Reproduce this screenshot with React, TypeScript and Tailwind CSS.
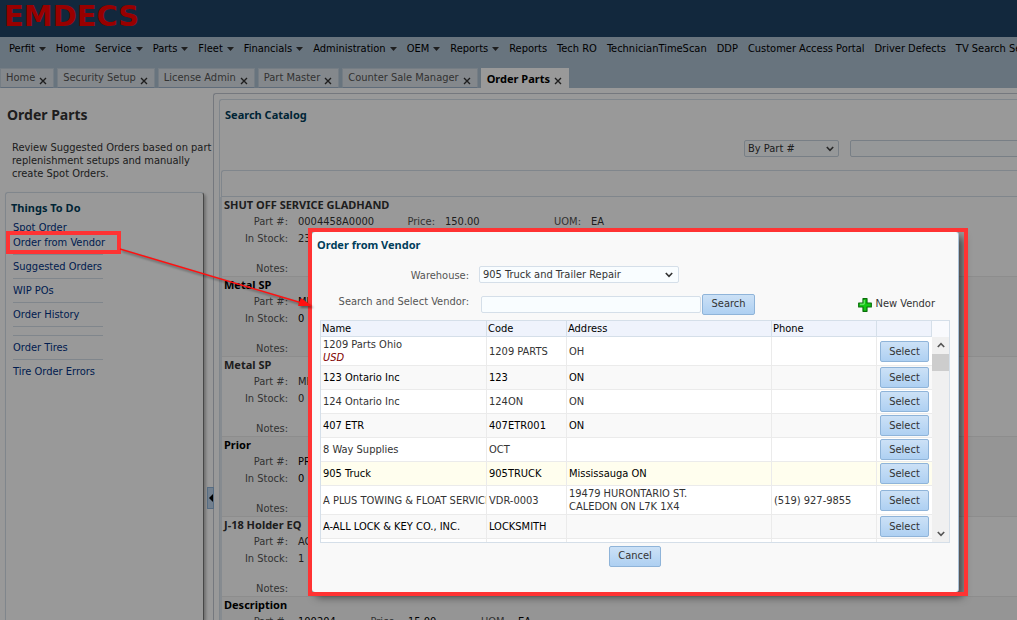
import clsx from "clsx";

const NAV = [
  { label: "Perfit", menu: true },
  { label: "Home" },
  { label: "Service", menu: true },
  { label: "Parts", menu: true },
  { label: "Fleet", menu: true },
  { label: "Financials", menu: true },
  { label: "Administration", menu: true },
  { label: "OEM", menu: true },
  { label: "Reports", menu: true },
  { label: "Reports" },
  { label: "Tech RO" },
  { label: "TechnicianTimeScan" },
  { label: "DDP" },
  { label: "Customer Access Portal" },
  { label: "Driver Defects" },
  { label: "TV Search Se" },
];

const TABS = ["Home", "Security Setup", "License Admin", "Part Master", "Counter Sale Manager", "Order Parts"];

const PARTS = [
  { title: "SHUT OFF SERVICE GLADHAND", part: "0004458A0000", stock: "23", price: "150.00" },
  { title: "Metal SP", part: "ME", stock: "0" },
  { title: "Metal SP", part: "ME", stock: "0" },
  { title: "Prior", part: "PR", stock: "0" },
  { title: "J-18 Holder EQ", part: "AC", stock: "1" },
  { title: "Description", part: "100204", stock: "0", price: "15.00", compact: true },
];

const VENDORS = [
  { name: "1209 Parts Ohio", currency: "USD", code: "1209 PARTS", address: ["OH"] },
  { name: "123 Ontario Inc", code: "123", address: ["ON"] },
  { name: "124 Ontario Inc", code: "124ON", address: ["ON"] },
  { name: "407 ETR", code: "407ETR001", address: ["ON"] },
  { name: "8 Way Supplies", code: "OCT", address: [] },
  { name: "905 Truck", code: "905TRUCK", address: ["Mississauga ON"], active: true },
  {
    name: "A PLUS TOWING & FLOAT SERVICES",
    code: "VDR-0003",
    address: ["19479 HURONTARIO ST.", "CALEDON ON L7K 1X4"],
    phone: "(519) 927-9855",
  },
  { name: "A-ALL LOCK & KEY CO., INC.", code: "LOCKSMITH", address: [] },
];

const bold = "font-['Noto_Sans','Open_Sans',sans-serif] font-bold";

function Chevron({ className }: { className?: string }) {
  return (
    <svg viewBox="0 0 8 6" className={clsx("h-[6px] w-[8px]", className)} fill="none" stroke="currentColor" strokeWidth="1.6">
      <path d="M0.8 1 L4 4.4 L7.2 1" />
    </svg>
  );
}

function Button({ children, className }: { children: string; className?: string }) {
  return (
    <button
      type="button"
      className={clsx(
        "h-[21px] rounded-[2px] border border-[#8fb4d9] bg-linear-to-b from-[#cce1f6] to-[#aed0f2] text-[#333]",
        className
      )}
    >
      {children}
    </button>
  );
}

function TopBar() {
  return (
    <header>
      <div className="h-[37px] bg-[#1e4367] pl-[4px]">
        <div className="font-['DejaVu_Sans',sans-serif] text-[29px] leading-[33px] font-bold text-[#ff0000]">EMDECS</div>
      </div>
      <div className="flex h-[51px] flex-col justify-between bg-[#aec1d3]">
        <nav className="flex gap-[10px] overflow-hidden pl-[9px] whitespace-nowrap text-black">
          {NAV.map((item, i) => (
            <a key={i} href="#" className="flex h-[24px] shrink-0 items-center gap-[4px]">
              {item.label}
              {item.menu && (
                <svg viewBox="0 0 7 4" className="h-[4px] w-[7px]" fill="#333">
                  <path d="M0 0 H7 L3.5 4 Z" />
                </svg>
              )}
            </a>
          ))}
        </nav>
        <div className="flex gap-[3px]">
          {TABS.map((tab, i) => {
            const active = i === TABS.length - 1;
            return (
              <div
                key={tab}
                className={clsx(
                  "flex h-[20px] items-center gap-[4px] border-x border-t pt-px pr-[6px] pl-[5px] whitespace-nowrap",
                  active
                    ? "border-white bg-white text-black"
                    : "border-b border-t-[#c4d0dc] border-r-[#c4d0dc] border-b-[#9fb4cc] border-l-[#c4d0dc] bg-[#dde3ea] text-[#555]",
                  active && bold
                )}
              >
                <a href="#">{tab}</a>
                <button type="button" aria-label={`Close ${tab}`} className="pt-[4px] text-[#333]">
                  <svg viewBox="0 0 8 8" className="h-[8px] w-[8px]" stroke="currentColor" strokeWidth="1.4">
                    <path d="M1 1 L7 7 M7 1 L1 7" />
                  </svg>
                </button>
              </div>
            );
          })}
        </div>
      </div>
    </header>
  );
}

function TaskLink({ children, last }: { children: string; last?: boolean }) {
  return (
    <li className={clsx("h-[24px] pt-[5px]", !last && "border-b border-[#d5dfe9]")}>
      <a href="#">{children}</a>
    </li>
  );
}

function Sidebar() {
  return (
    <aside className="flex w-[213px] shrink-0 flex-col pl-[5px]">
      <h1 className={clsx(bold, "pt-[18px] pl-[2px] text-[14px] leading-[18px] text-[#333]")}>Order Parts</h1>
      <p className="pt-[17px] pl-[7px] leading-[13px] whitespace-nowrap text-[#333]">
        Review Suggested Orders based on part
        <br />
        replenishment setups and manually
        <br />
        create Spot Orders.
      </p>
      <section className="mt-[12px] w-[199px] grow rounded-t-[3px] border-x border-t border-[#d5dfe9] border-r-[#777] pt-[8px] pl-[5px] shadow-[2px_2px_3px_#bbb]">
        <h2 className={clsx(bold, "leading-[14px] text-[#003d5b]")}>Things To Do</h2>
        <ul className="w-[92px] pl-[2px] leading-[14px] whitespace-nowrap text-[#003286]">
          <li className="h-[16px] pt-[6px]">
            <a href="#">Spot Order</a>
          </li>
          <TaskLink>Order from Vendor</TaskLink>
          <TaskLink>Suggested Orders</TaskLink>
          <TaskLink>WIP POs</TaskLink>
          <TaskLink>Order History</TaskLink>
          <li className="h-[9px] border-b border-[#d5dfe9]" />
          <TaskLink>Order Tires</TaskLink>
          <TaskLink last>Tire Order Errors</TaskLink>
        </ul>
      </section>
    </aside>
  );
}

function Catalog() {
  return (
    <main className="mt-[5px] flex min-w-0 grow flex-col rounded-tl-[3px] border-t border-l border-[#c3c9d3] pt-[5px] pl-[5px]">
      <section className="flex grow flex-col rounded-tl-[3px] border-t border-l border-[#d5dfe9]">
        <div className="h-[70px] pl-[5px]">
          <h2 className={clsx(bold, "pt-[8px] leading-[14px] text-[#003d5b]")}>Search Catalog</h2>
          <form className="flex gap-[11px] pt-[18px] pl-[519px]">
            <div className="relative">
              <select
                aria-label="Search by"
                className="h-[17px] w-[95px] appearance-none rounded-[2px] border border-[#c8d4df] bg-[#fafdff] pt-px pl-[3px] leading-[14px] text-[#333]"
              >
                <option>By Part #</option>
              </select>
              <Chevron className="pointer-events-none absolute top-[6px] right-[5px] text-[#444]" />
            </div>
            <input
              aria-label="Search text"
              className="h-[17px] w-[240px] shrink-0 rounded-[2px] border border-[#c8d4df] bg-[#fafdff] px-[3px]"
            />
          </form>
        </div>
        <div className="ml-px h-[27px] rounded-tl-[3px] border border-r-0 border-[#d5dfe9]" />
        <ul className="grow border-l-2 border-[#dfe8f1]">
          {PARTS.map((p, i) => (
            <li
              key={i}
              className={clsx(
                "h-[80px] border-b border-[#ebebeb] pt-px pl-[2px] leading-[14px] whitespace-nowrap",
                i % 2 ? "bg-[#f9f9f9] text-black" : "bg-white text-[#333]"
              )}
            >
              <h3 className={bold}>{p.title}</h3>
              <dl
                className={clsx(
                  "grid gap-x-[10px] pt-px [&>dt]:text-right [&>dt]:text-[#555]",
                  p.compact
                    ? "grid-cols-[64px_56px_34px_53px_37px_auto]"
                    : "grid-cols-[64px_93px_34px_89px_37px_auto]"
                )}
              >
                <dt className="pt-[2px]">Part #:</dt>
                <dd className="pt-[2px]">{p.part}</dd>
                {p.price && (
                  <>
                    <dt className="pt-[2px]">Price:</dt>
                    <dd className="pt-[2px]">{p.price}</dd>
                    <dt className="pt-[2px]">UOM:</dt>
                    <dd className="pt-[2px]">EA</dd>
                  </>
                )}
                <dt className="col-start-1 pt-[3px]">In Stock:</dt>
                <dd className="pt-[3px]">{p.stock}</dd>
                <dt className="col-start-1 pt-[16px]">Notes:</dt>
              </dl>
            </li>
          ))}
        </ul>
      </section>
    </main>
  );
}

function VendorTable() {
  return (
    <div className="mt-[5px] flex h-[223px] overflow-hidden border border-[#d5dfe9] bg-white">
      <table className="w-full table-fixed border-separate border-spacing-0 self-start text-left">
        <colgroup>
          <col className="w-[166px]" />
          <col className="w-[80px]" />
          <col className="w-[205px]" />
          <col className="w-[105px]" />
          <col className="w-[55px]" />
        </colgroup>
        <thead>
          <tr className="h-[16px] bg-[#eff3fc] leading-[15px] text-black [&>th]:border-r [&>th]:border-b [&>th]:border-[#d5dfe9] [&>th]:p-0 [&>th]:pl-px [&>th]:font-normal">
            <th>Name</th>
            <th>Code</th>
            <th>Address</th>
            <th>Phone</th>
            <th aria-label="Actions" />
          </tr>
        </thead>
        <tbody>
          {VENDORS.map((v, i) => (
            <tr
              key={v.code}
              className={clsx(
                "leading-[13px] whitespace-nowrap [&>td]:overflow-hidden [&>td]:border-b [&>td]:border-[#ebebeb] [&>td]:p-0 [&>td]:pl-[2px]",
                v.currency || v.address.length > 1 ? "h-[29px]" : "h-[24px]",
                v.active ? "bg-[#fffeee]" : i % 2 ? "bg-[#f9f9f9]" : "bg-white",
                i % 2 ? "text-black" : "text-[#333]"
              )}
            >
              <td className="border-r">
                {v.name}
                {v.currency && <div className="text-[#800000] italic">{v.currency}</div>}
              </td>
              <td className="border-r">{v.code}</td>
              <td className="border-r">
                {v.address.map((line) => (
                  <div key={line}>{line}</div>
                ))}
              </td>
              <td className="border-r">{v.phone}</td>
              <td>
                <Button className="ml-px block w-[49px]">Select</Button>
              </td>
            </tr>
          ))}
          <tr className="h-[24px] [&>td]:border-r [&>td]:border-[#ebebeb]">
            <td />
            <td />
            <td />
            <td />
          </tr>
        </tbody>
      </table>
      <div className="flex w-[17px] shrink-0 flex-col items-center bg-[#f0f0f0] text-[#555]">
        <div className="h-[16px] w-full bg-[#f9fafd]" />
        <Chevron className="mt-[5px] mb-[6px] rotate-180" />
        <div className="h-[17px] w-full bg-[#cdcdcd]" />
        <Chevron className="mt-auto mb-[5px]" />
      </div>
    </div>
  );
}

function VendorDialog() {
  return (
    <div
      role="dialog"
      aria-labelledby="dialog-title"
      className="absolute top-[232px] left-[312px] flex w-[647px] flex-col rounded-[3px] border-r border-[#a9c0d6] bg-[#f9f9f9] pt-[6px] pr-[8px] pb-[25px] pl-[8px] shadow-[4px_5px_8px_rgba(0,0,0,0.55)]"
    >
      <h2 id="dialog-title" className={clsx(bold, "-ml-[3px] leading-[14px] text-[#003d5b]")}>
        Order from Vendor
      </h2>
      <form className="grid grid-cols-[149px_1fr] items-center gap-x-[10px] pt-[12px]">
        <label htmlFor="warehouse" className="pt-[2px] text-right leading-[14px] text-[#555]">
          Warehouse:
        </label>
        <div className="flex h-[22px] items-center">
          <div className="relative">
            <select
              id="warehouse"
              className="h-[17px] w-[200px] appearance-none rounded-[2px] border border-[#d5dfe9] bg-[#f9fdff] pt-px pl-[3px] leading-[14px] text-[#333]"
            >
              <option>905 Truck and Trailer Repair</option>
            </select>
            <Chevron className="pointer-events-none absolute top-[6px] right-[6px] text-[#333]" />
          </div>
        </div>
        <label htmlFor="vendor" className="self-start pt-[9px] text-right leading-[14px] text-[#555]">
          Search and Select Vendor:
        </label>
        <div className="flex h-[29px] items-end pr-[15px]">
          <input
            id="vendor"
            className="mb-[2px] ml-[2px] h-[17px] w-[220px] rounded-[2px] border border-[#d5dfe9] bg-[#f9fdff] px-[3px]"
          />
          <Button className="ml-px w-[53px]">Search</Button>
          <button type="button" className="ml-auto flex h-[21px] items-center gap-[4px] text-[#333]">
            <svg viewBox="0 0 14 14" className="h-[14px] w-[14px]">
              <path
                d="M5 0.7 H9 V5 H13.3 V9 H9 V13.3 H5 V9 H0.7 V5 H5 Z"
                fill="#14c814"
                stroke="#0a6e0a"
                strokeWidth="1.2"
                strokeLinejoin="round"
              />
              <path d="M6.2 2 V6.2 H2" fill="none" stroke="#7df07d" />
            </svg>
            New Vendor
          </button>
        </div>
      </form>
      <VendorTable />
      <Button className="mt-[3px] w-[52px] self-center">Cancel</Button>
    </div>
  );
}

function Annotations() {
  return (
    <>
      <div className="pointer-events-none absolute top-[228px] left-[308px] h-[368px] w-[660px] border-4 border-[#ff3333]" />
      <div className="pointer-events-none absolute top-[231px] left-[6px] h-[23px] w-[115px] border-4 border-[#ff3333]" />
      <svg
        viewBox="0 0 200 70"
        className="pointer-events-none absolute top-[245px] left-[115px] h-[70px] w-[200px] drop-shadow-[2px_2px_1px_rgba(0,0,0,0.4)]"
      >
        <path d="M5 4 L187 58" stroke="#ff1010" strokeWidth="1.4" />
        <path d="M197 61 L183 61 L186 53 Z" fill="#ff1010" />
      </svg>
    </>
  );
}

export default function App() {
  return (
    <div className="relative flex h-screen flex-col overflow-hidden bg-white font-['DejaVu_Sans_Condensed','DejaVu_Sans',sans-serif] text-[11px]">
      <TopBar />
      <div className="relative flex min-h-0 grow">
        <Sidebar />
        <button
          type="button"
          aria-label="Collapse panel"
          className="absolute top-[399px] left-[207px] flex h-[22px] w-[7px] items-center justify-center border border-[#8fb4d9] bg-[#bfd6ee]"
        >
          <svg viewBox="0 0 4 8" className="h-[8px] w-[4px] shrink-0">
            <path d="M4 0 V8 L0 4 Z" />
          </svg>
        </button>
        <Catalog />
      </div>
      <div className="absolute inset-0 bg-black/40" />
      <VendorDialog />
      <Annotations />
    </div>
  );
}
